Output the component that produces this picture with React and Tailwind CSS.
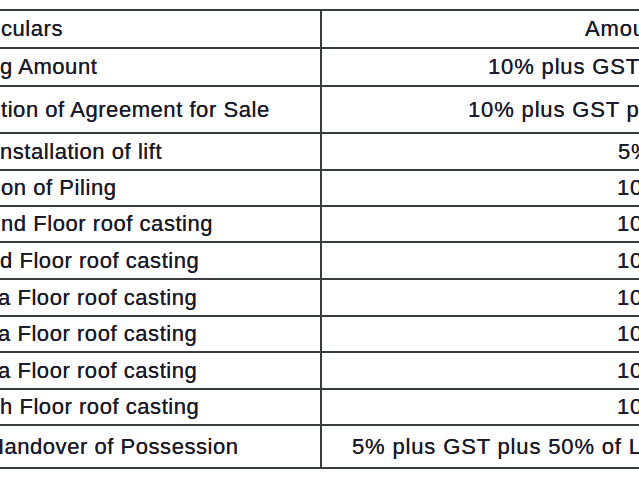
const rows = [
  { h: "h-[38px]", left: "culars", lx: "ml-[1px]", right: "Amount", rx: "pl-[263px]" },
  { h: "h-[38px]", left: "g Amount", lx: "ml-[0px]", right: "10% plus GST on Booking", rx: "pl-[166px]" },
  { h: "h-[47px]", left: "tion of Agreement for Sale", lx: "ml-[1px]", right: "10% plus GST plus 20% of Land", rx: "pl-[146px]" },
  { h: "h-[37px]", left: "nstallation of lift", lx: "ml-[0px]", right: "5% plus GST", rx: "pl-[296px]" },
  { h: "h-[36px]", left: "on of Piling", lx: "ml-[1px]", right: "10% plus GST", rx: "pl-[295px]" },
  { h: "h-[36px]", left: "nd Floor roof casting", lx: "ml-[1px]", right: "10% plus GST", rx: "pl-[295px]" },
  { h: "h-[37px]", left: "d Floor roof casting", lx: "ml-[0px]", right: "10% plus GST", rx: "pl-[295px]" },
  { h: "h-[37px]", left: "a Floor roof casting", lx: "ml-[-2px]", right: "10% plus GST", rx: "pl-[295px]" },
  { h: "h-[36px]", left: "a Floor roof casting", lx: "ml-[-2px]", right: "10% plus GST", rx: "pl-[295px]" },
  { h: "h-[37px]", left: "a Floor roof casting", lx: "ml-[-2px]", right: "10% plus GST", rx: "pl-[295px]" },
  { h: "h-[36px]", left: "h Floor roof casting", lx: "ml-[0px]", right: "10% plus GST", rx: "pl-[295px]" },
  { h: "h-[43px]", left: "Handover of Possession", lx: "ml-[-12px]", right: "5% plus GST plus 50% of Land Share", rx: "pl-[30px]" },
];

export default function App() {
  return (
    <div className="w-[639px] h-[480px] overflow-hidden bg-white pt-[9px] font-['Liberation_Sans',Arial,sans-serif] text-[22px] leading-none text-[#1a1a28] [text-shadow:0_0_0.6px_#1a1a28]">
      <div className="border-t-2 border-[#383c3c]">
        {rows.map((r, i) => (
          <div key={i} className={`flex border-b-2 border-[#383c3c] ${r.h}`}>
            <div className="w-[322px] shrink-0 border-r-2 border-[#383c3c] overflow-hidden flex items-center whitespace-nowrap tracking-[0.55px]">
              <span className={r.lx}>{r.left}</span>
            </div>
            <div className={`flex-1 overflow-hidden flex items-center whitespace-nowrap tracking-[0.85px] ${r.rx}`}>
              <span>{r.right}</span>
            </div>
          </div>
        ))}
      </div>
    </div>
  );
}
